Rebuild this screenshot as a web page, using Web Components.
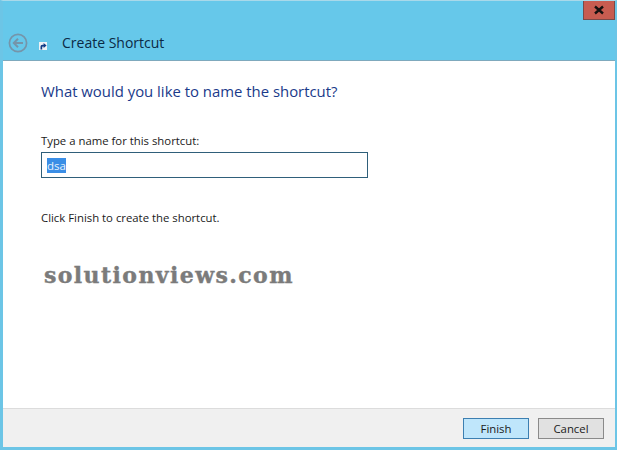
<!DOCTYPE html>
<html>
<head>
<meta charset="utf-8">
<style>
  html, body { margin: 0; padding: 0; background: #fff; }
  body { font-family: "Open Sans", sans-serif; }
</style>
</head>
<body>
<shortcut-window>
  <wizard-header slot="header" title="Create Shortcut"></wizard-header>
  <wizard-body slot="body"></wizard-body>
  <wizard-footer slot="footer"></wizard-footer>
</shortcut-window>

<script>
class ShortcutWindow extends HTMLElement {
  constructor() {
    super();
    this.attachShadow({ mode: 'open' });
    this.shadowRoot.innerHTML = `
      <style>
        :host {
          display: flex;
          flex-direction: column;
          box-sizing: border-box;
          width: 617px;
          height: 450px;
          background: #66c8ea;
          border-top: 1px solid #a9d9ea;
          border-left: 3px solid #6cc5e6;
          border-right: 2px solid #6cc5e6;
          border-bottom: 3px solid #6cc5e6;
        }
        .content {
          flex: 1;
          display: flex;
          flex-direction: column;
          min-height: 0;
          background: #fff;
        }
      </style>
      <slot name="header"></slot>
      <div class="content">
        <slot name="body"></slot>
        <slot name="footer"></slot>
      </div>
    `;
  }
}

class WizardHeader extends HTMLElement {
  constructor() {
    super();
    this.attachShadow({ mode: 'open' });
  }

  connectedCallback() {
    this.shadowRoot.innerHTML = `
      <style>
        :host {
          display: flex;
          flex-direction: column;
          flex: none;
          height: 60px;
          box-sizing: border-box;
          background: #66c8ea;
          border-bottom: 1px solid #7fa9bd;
        }
        .top {
          display: flex;
          justify-content: flex-end;
          height: 19px;
        }
        .close {
          width: 32px;
          height: 19px;
          box-sizing: border-box;
          background: #c75c50;
          border: 1px solid #7a4a48;
          border-top: 0;
          display: flex;
          align-items: center;
          justify-content: center;
        }
        .bar {
          display: flex;
          align-items: center;
          margin-top: 13px;
          height: 20px;
          padding-left: 5px;
        }
        .back { margin-right: 11px; }
        .app { margin-right: 15px; margin-top: 5px; }
        .title {
          font-size: 14px;
          color: #0b2a45;
          line-height: 20px;
          white-space: nowrap;
        }
      </style>
      <div class="top">
        <div class="close">
          <svg width="12" height="10" viewBox="0 0 12 10">
            <path d="M2 1.5 L10 8.5 M10 1.5 L2 8.5" stroke="#14100f" stroke-width="2.4" fill="none"/>
          </svg>
        </div>
      </div>
      <div class="bar">
        <svg class="back" width="20" height="20" viewBox="0 0 20 20">
          <circle cx="10" cy="10" r="8.6" fill="none" stroke="#7595aa" stroke-width="1.7"/>
          <path d="M15 10 H6 M10 5.8 L5.8 10 L10 14.2" fill="none" stroke="#7595aa" stroke-width="2"/>
        </svg>
        <svg class="app" width="8" height="8" viewBox="0 0 8 8">
          <rect width="8" height="8" fill="#eef2f6"/>
          <path d="M1.5 7.5 V4.5 Q1.5 2.8 3.4 2.8 H4.6 V1 L7.6 3.6 L4.6 6 V4.5 H3.8 Q3.2 4.5 3.2 5.4 V7.5 Z" fill="#123c86"/>
        </svg>
        <span class="title">${this.getAttribute('title')}</span>
      </div>
    `;
  }
}

class WizardBody extends HTMLElement {
  constructor() {
    super();
    this.attachShadow({ mode: 'open' });
    this.shadowRoot.innerHTML = `
      <style>
        :host {
          display: flex;
          flex-direction: column;
          flex: 1;
          min-height: 0;
          padding: 20px 0 0 38px;
          background: #fff;
        }
        h1 {
          margin: 0;
          font-size: 14.9px;
          font-weight: 400;
          line-height: 20px;
          color: #1a3a8a;
        }
        label {
          margin-top: 32px;
          font-size: 11.35px;
          line-height: 15px;
          color: #1a1a1a;
        }
        .field {
          display: flex;
          align-items: center;
          box-sizing: border-box;
          width: 327px;
          height: 26px;
          margin-top: 4px;
          padding-left: 5px;
          border: 1px solid #2f5f7a;
          font-size: 11.5px;
        }
        .sel {
          background: #3a8ee6;
          color: #e8f2fc;
          line-height: 15px;
        }
        p {
          margin: 32px 0 0;
          font-size: 11.35px;
          line-height: 15px;
          color: #1a1a1a;
        }
        .mark {
          margin-top: 36px;
          margin-left: 3px;
          font-family: "DejaVu Serif", serif;
          font-weight: 700;
          font-size: 22px;
          line-height: 28px;
          letter-spacing: 1.4px;
          -webkit-text-stroke: 0.4px #7b7b7b;
          color: #7b7b7b;
          white-space: nowrap;
        }
      </style>
      <h1>What would you like to name the shortcut?</h1>
      <label>Type a name for this shortcut:</label>
      <div class="field"><span class="sel">dsa</span></div>
      <p>Click Finish to create the shortcut.</p>
      <div class="mark">solutionviews.com</div>
    `;
  }
}

class WizardFooter extends HTMLElement {
  constructor() {
    super();
    this.attachShadow({ mode: 'open' });
    this.shadowRoot.innerHTML = `
      <style>
        :host {
          display: flex;
          justify-content: flex-end;
          align-items: center;
          flex: none;
          gap: 9px;
          box-sizing: border-box;
          height: 39px;
          padding-right: 11px;
          background: #f0f0f0;
          border-top: 1px solid #dcdcdc;
        }
        .btn {
          box-sizing: border-box;
          width: 66px;
          height: 21px;
          display: flex;
          align-items: center;
          justify-content: center;
          font-size: 11.35px;
          color: #1a1a1a;
        }
        .primary { background: #bfe6fb; border: 1px solid #3c7fb1; }
        .plain { background: #e1e1e1; border: 1px solid #8a8a8a; }
      </style>
      <div class="btn primary">Finish</div>
      <div class="btn plain">Cancel</div>
    `;
  }
}

customElements.define('shortcut-window', ShortcutWindow);
customElements.define('wizard-header', WizardHeader);
customElements.define('wizard-body', WizardBody);
customElements.define('wizard-footer', WizardFooter);
</script>
</body>
</html>
